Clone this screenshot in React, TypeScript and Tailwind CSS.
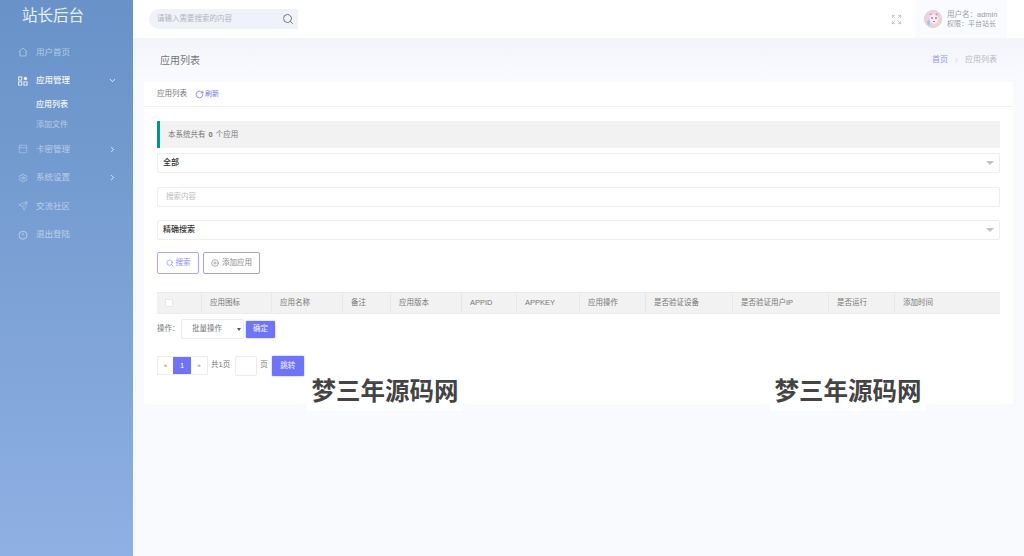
import { ChevronDown, ChevronRight, CirclePlus, Expand, PanelTop, RotateCw, Search, Send, Settings } from "lucide-react";

const font = "font-['Liberation_Sans','Noto_Sans_CJK_SC',sans-serif]";

const columns = [
  { label: "应用图标", w: "w-[70px]" },
  { label: "应用名称", w: "w-[71px]" },
  { label: "备注", w: "w-[48px]" },
  { label: "应用版本", w: "w-[71px]" },
  { label: "APPID", w: "w-[55px]" },
  { label: "APPKEY", w: "w-[63px]" },
  { label: "应用操作", w: "w-[66px]" },
  { label: "是否验证设备", w: "w-[87px]" },
  { label: "是否验证用户IP", w: "w-[96px]" },
  { label: "是否运行", w: "w-[66px]" },
  { label: "添加时间", w: "flex-1" },
];

function HomeIcon() {
  return (
    <svg width="10" height="10" viewBox="0 0 10 10" fill="none" stroke="currentColor" strokeWidth="0.8">
      <path d="M0.6 5 5 1l4.4 4M2 4.2V9h6V4.2" />
    </svg>
  );
}

function AppsIcon() {
  return (
    <svg width="10" height="10" viewBox="0 0 10 10" fill="none" stroke="currentColor" strokeWidth="0.9">
      <rect x="0.6" y="0.9" width="3.2" height="3.2" />
      <rect x="0.6" y="5.9" width="3.2" height="3.2" />
      <rect x="5.9" y="5.9" width="3.2" height="3.2" />
      <circle cx="7.5" cy="2.5" r="1.7" fill="currentColor" stroke="none" />
    </svg>
  );
}

function ClockIcon() {
  return (
    <svg width="10" height="10" viewBox="0 0 10 10" fill="none" stroke="currentColor" strokeWidth="0.9">
      <circle cx="5" cy="5.2" r="4" />
      <path d="M5 2.8v2.6" />
    </svg>
  );
}

function Avatar() {
  return (
    <svg width="18" height="18" viewBox="0 0 18 18">
      <circle cx="9" cy="9" r="8.5" fill="#efd3dc" stroke="#d8cfc8" />
      <path d="M3 12c1-2 2-3 3-3v7c-1.500-.5-2.500-2-3-4Z" fill="#a9c6e6" />
      <ellipse cx="10" cy="9" rx="4.500" ry="5" fill="#fbeaf0" />
      <circle cx="8" cy="8" r="0.8" fill="#5b4a55" />
      <circle cx="12" cy="8" r="0.8" fill="#5b4a55" />
      <path d="M5 4.500 7 3l1 2ZM11 5l2-2 1 2.500Z" fill="#d88aa6" />
      <path d="M9 11.500h2" stroke="#5b4a55" strokeWidth="0.6" />
    </svg>
  );
}

function NavItem({ icon, label, arrow }: { icon: React.ReactNode; label: string; arrow?: boolean }) {
  return (
    <div className="flex h-[28.5px] items-center pl-[18px] pr-[16px] text-[8.5px] text-white/50">
      <span className="flex w-[18px] shrink-0">{icon}</span>
      <span>{label}</span>
      {arrow && <ChevronRight className="ml-auto text-white/80" size={9} strokeWidth={2.4} />}
    </div>
  );
}

function SelectBox({ label, mt }: { label: string; mt: string }) {
  return (
    <div className={`${mt} flex h-[20px] items-center justify-between rounded-[2px] border border-[#eeeeee] pl-[5px] pr-[5px] text-[8px] font-medium text-[#333]`}>
      <span>{label}</span>
      <span className="h-0 w-0 border-x-[4px] border-t-[4px] border-x-transparent border-t-[#c2c2c2]" />
    </div>
  );
}

function Watermark({ left }: { left: string }) {
  return (
    <div className={`absolute top-[374px] ${left} flex h-[37px] w-[156px] items-center justify-center whitespace-nowrap bg-white/90 text-[24.500px] font-bold leading-none text-[#444]`}>
      梦三年源码网
    </div>
  );
}

export default function App() {
  return (
    <div className={`relative flex h-[556px] w-[1024px] overflow-hidden bg-[#f9fafe] ${font}`}>
      {/* sidebar */}
      <aside className="flex w-[133px] shrink-0 flex-col bg-gradient-to-b from-[#6892c8] to-[#8fb0e3]">
        <div className="flex h-[32px] items-center pl-[22px] text-[15.500px] text-white/85">站长后台</div>
        <div className="mt-[6px] flex flex-col">
          <NavItem icon={<HomeIcon />} label="用户首页" />
          <div className="flex h-[28.5px] items-center pl-[18px] pr-[16px] text-[8.5px] font-medium text-white/90">
            <span className="flex w-[18px] shrink-0"><AppsIcon /></span>
            <span>应用管理</span>
            <ChevronDown className="ml-auto text-white/90" size={9} strokeWidth={2.4} />
          </div>
          <div className="flex h-[20px] items-center pl-[36px] text-[8px] font-medium text-white/90">应用列表</div>
          <div className="flex h-[20px] items-center pl-[36px] text-[8px] text-white/50">添加文件</div>
          <NavItem icon={<PanelTop size={10} strokeWidth={1.4} />} label="卡密管理" arrow />
          <NavItem icon={<Settings size={10} strokeWidth={1.5} />} label="系统设置" arrow />
          <NavItem icon={<Send size={10} strokeWidth={1.4} />} label="交流社区" />
          <NavItem icon={<ClockIcon />} label="退出登陆" />
        </div>
      </aside>

      <main className="flex min-w-0 flex-1 flex-col">
        {/* header */}
        <header className="flex h-[38px] shrink-0 items-center bg-white pl-[16px] pr-[17px]">
          <div className="flex h-[20px] w-[149px] items-center justify-between rounded-l-[10px] bg-[#eff2f9] pl-[8px] pr-[4px] text-[7.5px] text-[#b0b5bf]">
            <span>请输入需要搜索的内容</span>
            <Search className="text-[#777]" size={12} strokeWidth={2} />
          </div>
          <Expand className="ml-auto text-[#a5a9b0]" size={11} strokeWidth={1.3} />
          <div className="ml-[13px] flex h-[38px] w-[92px] items-center gap-[5px] bg-[#fafbfe] pl-[9px]">
            <Avatar />
            <div className="flex flex-col text-[#999ea6]">
              <span className="text-[7.5px] leading-[9px]">用户名：admin</span>
              <span className="text-[7px] leading-[9px]">权限：平台站长</span>
            </div>
          </div>
        </header>

        {/* title row */}
        <div className="flex h-[44px] shrink-0 items-center bg-gradient-to-b from-[#f3f5fb] to-[#f9fafe] px-[27px]">
          <h1 className="text-[10px] font-normal text-[#777]">应用列表</h1>
          <div className="ml-auto flex items-center text-[8px] text-[#b5b8bf]">
            <span className="text-[#8f93f5]">首页</span>
            <ChevronRight className="mx-[5px] text-[#c0c3ca]" size={7} />
            <span>应用列表</span>
          </div>
        </div>

        {/* card */}
        <section className="ml-[11px] h-[322px] w-[869px] bg-white">
          <div className="flex h-[25px] items-center gap-[6px] border-b border-[#f0f0f0] pl-[13px] text-[7.5px] text-[#777]">
            <span>应用列表</span>
            <span className="ml-[2px] flex items-center gap-[1px] text-[7px] text-[#6f74f6]">
              <RotateCw size={9} strokeWidth={2} />
              刷新
            </span>
          </div>

          <div className="px-[13px] pt-[14px]">
            <div className="flex h-[27px] items-center border-l-[3px] border-[#009688] bg-[#f2f2f2] pl-[8px] text-[7.5px] text-[#777]">
              本系统共有 <b className="mx-[3px]">0</b> 个应用
            </div>
            <SelectBox label="全部" mt="mt-[5px]" />
            <div className="mt-[14px] flex h-[20px] items-center rounded-[2px] border border-[#eeeeee] pl-[8px] text-[7.5px] text-[#bbb]">搜索内容</div>
            <SelectBox label="精确搜索" mt="mt-[13px]" />

            <div className="mt-[12px] flex gap-[4px]">
              <button className="flex h-[22px] w-[42px] items-center justify-center gap-[2px] rounded-[2px] border border-[#a9a9f7] text-[7.5px] text-[#8a8ef4]">
                <Search size={8} />搜索
              </button>
              <button className="flex h-[22px] w-[57px] items-center justify-center gap-[3px] rounded-[2px] border border-[#a8a8a8] text-[7.5px] text-[#888]">
                <CirclePlus size={8} />添加应用
              </button>
            </div>

            {/* table header */}
            <div className="mt-[18px] flex h-[22px] border-y border-[#ebebeb] bg-[#f2f2f2] text-[7.5px] text-[#777]">
              <div className="flex w-[44px] shrink-0 items-center pl-[8px]">
                <span className="h-[8px] w-[8px] rounded-[1px] border border-[#e6e6e6] bg-white" />
              </div>
              {columns.map((c) => (
                <div key={c.label} className={`flex ${c.w} shrink-0 items-center border-l border-[#e8e8e8] pl-[8px]`}>
                  {c.label}
                </div>
              ))}
            </div>

            <div className="mt-[5px] flex items-center text-[7.5px] text-[#777]">
              <span className="w-[24px]">操作：</span>
              <div className="flex h-[20px] w-[63px] items-center justify-between rounded-[2px] border border-[#ececec] pl-[10px] pr-[2px]">
                批量操作
                <span className="h-0 w-0 border-x-[2px] border-t-[3px] border-x-transparent border-t-[#555]" />
              </div>
              <button className="ml-[2px] h-[17px] w-[29px] rounded-[1px] bg-[#6f74f6] text-[7.5px] text-white/90 shadow-[0_0_2px_rgba(111,116,246,0.7)]">确定</button>
            </div>

            <div className="mt-[17px] flex items-start text-[7.5px] text-[#777]">
              <div className="flex h-[19px] border border-[#ececec]">
                <span className="flex w-[15px] items-center justify-center text-[6px]">«</span>
                <span className="flex w-[18px] items-center justify-center bg-[#6f74f6] text-white">1</span>
                <span className="flex w-[16px] items-center justify-center text-[6px]">»</span>
              </div>
              <span className="ml-[3px] mt-[3px]">共1页</span>
              <span className="ml-[5px] h-[20px] w-[22px] rounded-[2px] border border-[#ececec]" />
              <span className="ml-[3px] mt-[3px]">页</span>
              <button className="ml-[4px] h-[20px] w-[32px] rounded-[1px] bg-[#6f74f6] text-[7.5px] text-white/90 shadow-[0_0_2px_rgba(111,116,246,0.7)]">跳转</button>
            </div>
          </div>
        </section>
      </main>

      <Watermark left="left-[307px]" />
      <Watermark left="left-[770px]" />
    </div>
  );
}
